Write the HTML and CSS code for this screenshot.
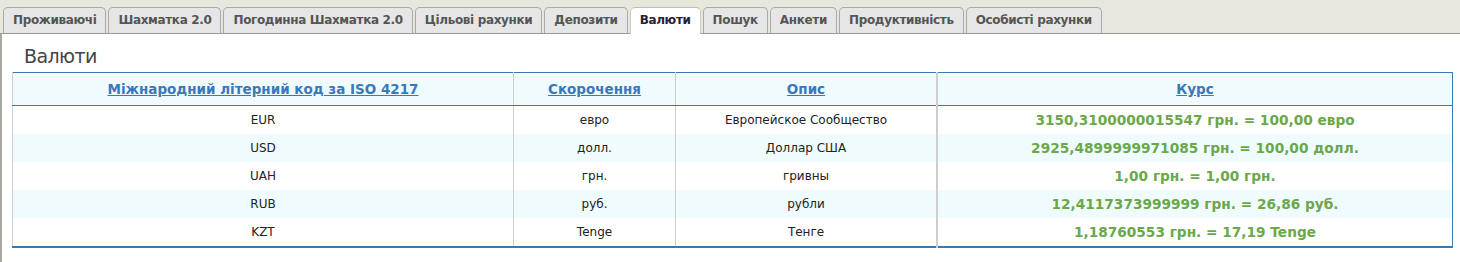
FILE: index.html
```html
<!DOCTYPE html>
<html lang="uk">
<head>
    <meta charset="UTF-8">
    <title>Валюти</title>
    <link rel="stylesheet" href="styles.css">
</head>
<body>
    <div class="tabs">
        <div class="tab">Проживаючі</div>
        <div class="tab">Шахматка 2.0</div>
        <div class="tab">Погодинна Шахматка 2.0</div>
        <div class="tab">Цільові рахунки</div>
        <div class="tab">Депозити</div>
        <div class="tab active">Валюти</div>
        <div class="tab">Пошук</div>
        <div class="tab">Анкети</div>
        <div class="tab">Продуктивність</div>
        <div class="tab">Особисті рахунки</div>
    </div>

    <div class="panel">
        <h2 class="title">Валюти</h2>

        <table class="grid">
            <thead>
                <tr>
                    <th class="col-code"><a href="#">Міжнародний літерний код за ISO 4217</a></th>
                    <th class="col-short"><a href="#">Скорочення</a></th>
                    <th class="col-desc"><a href="#">Опис</a></th>
                    <th class="col-rate"><a href="#">Курс</a></th>
                </tr>
            </thead>
            <tbody>
                <tr>
                    <td>EUR</td>
                    <td>евро</td>
                    <td>Европейское Сообщество</td>
                    <td class="rate">3150,3100000015547 грн. = 100,00 евро</td>
                </tr>
                <tr>
                    <td>USD</td>
                    <td>долл.</td>
                    <td>Доллар США</td>
                    <td class="rate">2925,4899999971085 грн. = 100,00 долл.</td>
                </tr>
                <tr>
                    <td>UAH</td>
                    <td>грн.</td>
                    <td>гривны</td>
                    <td class="rate">1,00 грн. = 1,00 грн.</td>
                </tr>
                <tr>
                    <td>RUB</td>
                    <td>руб.</td>
                    <td>рубли</td>
                    <td class="rate">12,4117373999999 грн. = 26,86 руб.</td>
                </tr>
                <tr>
                    <td>KZT</td>
                    <td>Tenge</td>
                    <td>Тенге</td>
                    <td class="rate">1,18760553 грн. = 17,19 Tenge</td>
                </tr>
            </tbody>
        </table>
    </div>
</body>
</html>
```

FILE: styles.css
```css
body {
    font-family: "DejaVu Sans", Verdana, sans-serif;
    margin: 0;
    background: white;
    color: #222;
}
.tabs {
    display: flex;
    align-items: flex-end;
    gap: 2px;
    height: 26px;
    padding: 7px 0 0 3px;
    background: #e8e7dd;
    border-bottom: 1px solid #9a9a94;
}
.tab {
    height: 25px;
    line-height: 25px;
    padding: 0 9px;
    border: 1px solid #aaa;
    border-bottom: none;
    border-radius: 5px 5px 0 0;
    background: #e6e6e6;
    color: #555;
    font-size: 12px;
    font-weight: bold;
    letter-spacing: -0.35px;
    white-space: nowrap;
}
.tab.active {
    height: 26px;
    margin-bottom: -1px;
    background: white;
    color: #222236;
    border-color: #c8c8c8;
    border-top: 1px solid #f2b84b;
}
.panel {
    border-left: 2px solid #aaa9a0;
    padding: 9px 7px 16px 10px;
}
.title {
    margin: 0 0 2px 12px;
    font-size: 19px;
    font-weight: normal;
    letter-spacing: -0.6px;
    color: #444;
    line-height: 27px;
}
.grid {
    width: 1441px;
    table-layout: fixed;
    border-collapse: collapse;
    border: 1px solid #3a78b0;
    border-bottom-width: 2px;
    font-size: 12px;
}
.grid th {
    height: 32px;
    padding: 0;
    background: #f0fbfe;
    border-bottom: 1px solid #3a78b0;
    border-left: 1px solid #cfcfcf;
    font-size: 13.5px;
}
.grid th a {
    color: #3a78b8;
}
.grid td {
    height: 28px;
    padding: 0;
    text-align: center;
    border-left: 1px solid #cfcfcf;
}
.grid tbody tr:nth-child(even) td {
    background: #f0fbfe;
}
.grid .col-code { width: 500px; }
.grid .col-short { width: 161px; }
.grid .col-desc { width: 260px; }
.grid th.col-rate,
.grid td.rate {
    border-left: 2px solid #cfcfcf;
}
.grid .rate {
    color: #6aa84a;
    font-weight: bold;
    font-size: 13.7px;
}
```
